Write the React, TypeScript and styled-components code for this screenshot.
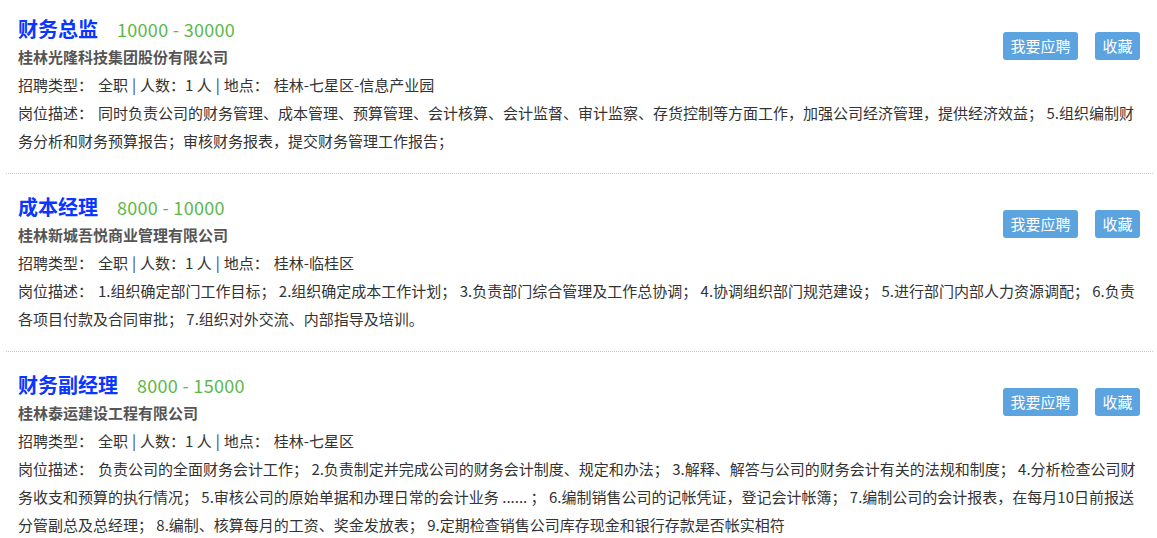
import React from "react";
import styled, { createGlobalStyle } from "styled-components";

const GlobalStyle = createGlobalStyle`
  html, body { margin: 0; padding: 0; background: #fff; }
  body {
    font-family: "Noto Sans CJK SC", "Noto Sans", sans-serif;
    font-size: 15px;
    color: #333;
  }
`;

const List = styled.div`
  padding: 0 4px 0 6px;
`;

const Item = styled.div`
  padding: 19px 13px 18px 12px;
  border-bottom: 1px dotted #c8c8c8;
  &:first-child { padding-top: 15px; }
  &:last-child { border-bottom: none; }
`;

const Header = styled.div`
  display: grid;
  grid-template-columns: 1fr auto;
  align-items: start;
`;

const TitleRow = styled.div`
  display: flex;
  align-items: baseline;
  gap: 19px;
  height: 28px;
  line-height: 28px;
`;

const Title = styled.span`
  font-size: 20px;
  font-weight: 700;
  color: #0a36ff;
`;

const Salary = styled.span`
  font-size: 18px;
  letter-spacing: 0.3px;
  color: #5cb84a;
`;

const Line = styled.div<{ $bold?: boolean }>`
  line-height: 28px;
  font-weight: ${(p) => (p.$bold ? 700 : 400)};
  color: ${(p) => (p.$bold ? "#555" : "#333")};
`;

const Label = styled.span`
  margin-right: 5px;
`;

const Sep = styled.span`
  color: #3d2f70;
  margin: 0 4px;
`;

const Actions = styled.div`
  display: flex;
  gap: 17px;
  margin-top: 17px;
`;

const Button = styled.button`
  height: 28px;
  padding: 0 7.5px;
  border: none;
  border-radius: 3px;
  background: #5ca4e0;
  color: #fff;
  font-family: inherit;
  font-size: 15px;
  line-height: 28px;
  cursor: pointer;
`;

type Job = {
  title: string;
  salary: string;
  company: string;
  location: string;
  desc: string;
};

const jobs: Job[] = [
  {
    title: "财务总监",
    salary: "10000 - 30000",
    company: "桂林光隆科技集团股份有限公司",
    location: "桂林-七星区-信息产业园",
    desc:
      "同时负责公司的财务管理、成本管理、预算管理、会计核算、会计监督、审计监察、存货控制等方面工作，加强公司经济管理，提供经济效益； 5.组织编制财务分析和财务预算报告；审核财务报表，提交财务管理工作报告；",
  },
  {
    title: "成本经理",
    salary: "8000 - 10000",
    company: "桂林新城吾悦商业管理有限公司",
    location: "桂林-临桂区",
    desc:
      "1.组织确定部门工作目标； 2.组织确定成本工作计划； 3.负责部门综合管理及工作总协调； 4.协调组织部门规范建设； 5.进行部门内部人力资源调配； 6.负责各项目付款及合同审批； 7.组织对外交流、内部指导及培训。",
  },
  {
    title: "财务副经理",
    salary: "8000 - 15000",
    company: "桂林泰运建设工程有限公司",
    location: "桂林-七星区",
    desc:
      "负责公司的全面财务会计工作； 2.负责制定并完成公司的财务会计制度、规定和办法； 3.解释、解答与公司的财务会计有关的法规和制度； 4.分析检查公司财务收支和预算的执行情况； 5.审核公司的原始单据和办理日常的会计业务 ...... ； 6.编制销售公司的记帐凭证，登记会计帐簿； 7.编制公司的会计报表，在每月10日前报送分管副总及总经理； 8.编制、核算每月的工资、奖金发放表； 9.定期检查销售公司库存现金和银行存款是否帐实相符",
  },
];

function JobItem({ job }: { job: Job }) {
  return (
    <Item>
      <Header>
        <div>
          <TitleRow>
            <Title>{job.title}</Title>
            <Salary>{job.salary}</Salary>
          </TitleRow>
          <Line $bold>{job.company}</Line>
          <Line>
            <Label>招聘类型：</Label>全职<Sep>|</Sep>人数：1 人<Sep>|</Sep>
            <Label>地点：</Label>
            {job.location}
          </Line>
        </div>
        <Actions>
          <Button>我要应聘</Button>
          <Button>收藏</Button>
        </Actions>
      </Header>
      <Line>
        <Label>岗位描述：</Label>
        {job.desc}
      </Line>
    </Item>
  );
}

export default function App() {
  return (
    <>
      <GlobalStyle />
      <List>
        {jobs.map((j) => (
          <JobItem key={j.title} job={j} />
        ))}
      </List>
    </>
  );
}
